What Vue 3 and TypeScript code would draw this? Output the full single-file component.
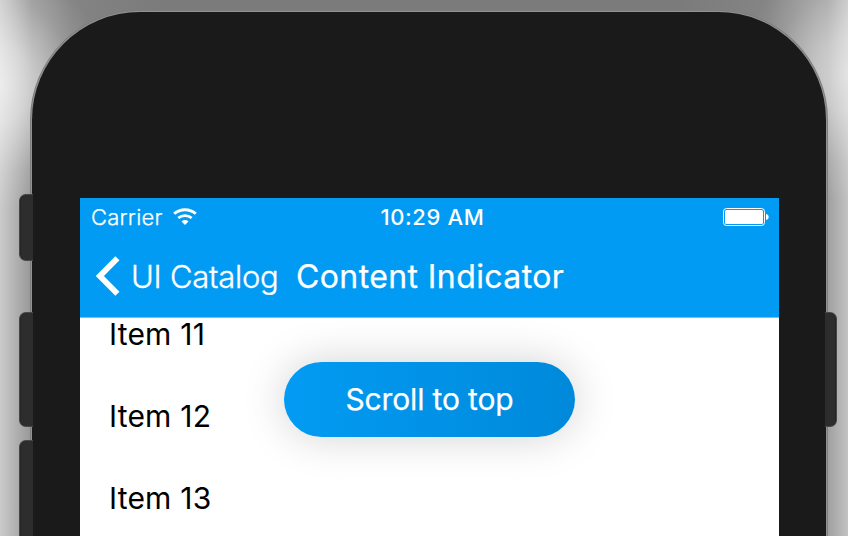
<script setup lang="ts">
const items: number[] = [11, 12, 13]
</script>

<template>
  <main class="stage">
    <section class="phone">
      <div class="screen">
        <header class="header">
          <div class="status">
            <div class="carrier">
              <span class="carrier-name">Carrier</span>
              <svg class="wifi" width="24" height="18" viewBox="0 0 24 18">
                <path d="M1.2 5.8C7.2.3 16.8.3 22.8 5.8" fill="none" stroke="#fff" stroke-width="2.9" />
                <path d="M5.3 10.1c3.8-3.3 9.6-3.3 13.4 0" fill="none" stroke="#fff" stroke-width="2.7" />
                <path d="M8.5 13.4c2-1.8 5-1.8 7 0L12 17z" fill="#fff" />
              </svg>
            </div>
            <span class="time">10:29 AM</span>
            <svg class="battery" width="46" height="18" viewBox="0 0 46 18">
              <rect x=".5" y=".5" width="41" height="17" rx="3" fill="none" stroke="#fff" />
              <rect x="2" y="2" width="38" height="14" rx="1.5" fill="#fff" />
              <path d="M43 6c3.6.6 3.6 5.4 0 6z" fill="#fff" />
            </svg>
          </div>
          <nav class="nav">
            <svg class="chevron" width="25" height="40" viewBox="0 0 25 40">
              <path d="M21.4 2.3 3.9 20l17.5 17.7" fill="none" stroke="#fff" stroke-width="5.8" />
            </svg>
            <span class="back">UI Catalog</span>
            <h1 class="title">Content Indicator</h1>
          </nav>
        </header>
        <ul class="list">
          <li v-for="n in items" :key="n">Item {{ n }}</li>
        </ul>
        <button class="indicator"><span>Scroll to top</span></button>
      </div>
    </section>
    <i class="side-button mute"></i>
    <i class="side-button volume-up"></i>
    <i class="side-button volume-down"></i>
    <i class="side-button power"></i>
  </main>
</template>

<style>
body { margin: 0; overflow: hidden; background: #fff; }
</style>

<style scoped>
.stage {
  position: relative;
  box-sizing: border-box;
  width: 848px;
  height: 536px;
  padding: 12px 0 0 32px;
  overflow: hidden;
  font-family: Inter, "Liberation Sans", sans-serif;
  background:
    radial-gradient(ellipse 105px 125px at 0 85px, rgba(255,255,255,.65), rgba(255,255,255,.5) 30%, rgba(255,255,255,.14) 70%, rgba(255,255,255,0)),
    radial-gradient(ellipse 105px 125px at 848px 75px, rgba(255,255,255,.55), rgba(255,255,255,.42) 30%, rgba(255,255,255,.12) 70%, rgba(255,255,255,0)),
    linear-gradient(90deg, #cbcbcb 0, #969696 32px, #848484 70px, #7b7b7b 160px, #7b7b7b 680px, #858585 770px, #a0a0a0 828px, #c2c2c2 848px);
}
.phone {
  position: relative;
  box-sizing: border-box;
  width: 794px;
  height: 700px;
  padding: 186px 47px 0 48px;
  border-radius: 108px;
  background: #1a1a1a;
  box-shadow: 0 0 0 1px #929292, 0 0 0 2px #7e7e7e;
}
.side-button {
  position: absolute;
  left: 19px;
  box-sizing: border-box;
  width: 14px;
  border: 1px solid #484848;
  border-right: 0;
  border-radius: 7px 0 0 7px;
  background: #2d2d2d;
  box-shadow: inset 1px 0 0 #242424;
}
.mute { top: 194px; height: 67px; }
.volume-up { top: 312px; height: 115px; }
.volume-down { top: 440px; height: 115px; }
.power {
  left: 825px;
  top: 312px;
  width: 12px;
  height: 115px;
  border: 1px solid #484848;
  border-left: 0;
  border-radius: 0 7px 7px 0;
  box-shadow: inset -1px 0 0 #242424;
}
.screen { position: relative; width: 699px; height: 400px; overflow: hidden; background: #fff; }
.header {
  box-sizing: border-box;
  height: 120px;
  border-bottom: 1px solid #b2b2b2;
  background: #029bf3;
  color: #fff;
}
.status {
  display: grid;
  grid-template-columns: 1fr auto 1fr;
  align-items: center;
  height: 38px;
  padding: 0 10px 0 11px;
}
.carrier { display: flex; align-items: center; gap: 9px; }
.carrier-name { font-size: 22px; font-weight: 300; width: 74px; letter-spacing: .2px; -webkit-text-stroke: .25px #fff; }
.wifi { margin-left: -1px; }
.time { margin-left: 5px; font-size: 22px; font-weight: 500; letter-spacing: .65px; }
.battery { justify-self: end; }
.nav { display: flex; align-items: center; height: 80px; padding-left: 16px; }
.back { width: 147px; margin-left: 10px; font-size: 31px; font-weight: 300; letter-spacing: -.25px; white-space: nowrap; -webkit-text-stroke: .35px #fff; }
.title { margin: 0 0 0 18px; font-size: 32px; font-weight: 400; letter-spacing: .4px; white-space: nowrap; -webkit-text-stroke: .25px #fff; }
.list { margin: 0; padding: 0 0 0 29px; list-style: none; color: #000; }
.list li { height: 82px; font-size: 30px; line-height: 32px; letter-spacing: .2px; }
.indicator {
  position: absolute;
  left: 204px;
  top: 164px;
  width: 291px;
  height: 74.5px;
  padding: 0 0 1px;
  border: 0;
  border-radius: 38px;
  background: linear-gradient(90deg, #029bf3, #0089da);
  box-shadow: 0 0 44px rgba(0,0,0,.18);
  color: #fff;
  font: 400 30px Inter, sans-serif;
  letter-spacing: -.15px;
  -webkit-text-stroke: .25px #fff;
}
</style>
